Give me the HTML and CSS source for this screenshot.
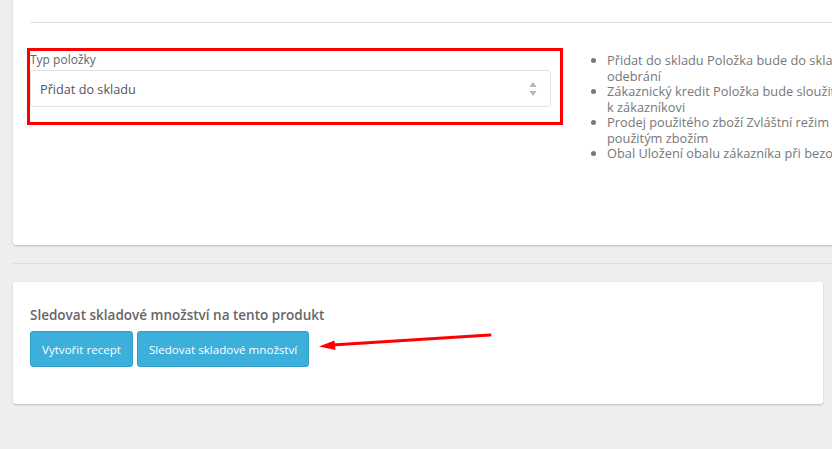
FILE: index.html
```html
<!DOCTYPE html>
<html lang="cs">
<head>
	<meta charset="UTF-8">
	<title>Skladové množství</title>
	<link rel="stylesheet" href="styles.css">
</head>
<body>
	<div class="page">
		<div class="card card-type">
			<hr class="line">
			<div class="row">
				<div class="form-group mark">
					<label class="label">Typ položky</label>
					<div class="select">
						<span>Přidat do skladu</span>
						<svg class="carets" width="8" height="16" viewBox="0 0 8 16">
							<path d="M4 1 L7.5 6 L0.5 6 Z" fill="#b5b5b5"/>
							<path d="M4 15 L7.5 10 L0.5 10 Z" fill="#b5b5b5"/>
						</svg>
					</div>
				</div>
				<ul class="help">
					<li>Přidat do skladu Položka bude do skladu přidána a při prodeji odebrání</li>
					<li>Zákaznický kredit Položka bude sloužit jako kredit přiřazený k&nbsp;zákazníkovi</li>
					<li>Prodej použitého zboží Zvláštní režim daně pro obchodníky s použitým zbožím</li>
					<li>Obal Uložení obalu zákazníka při bezobalovém prodeji</li>
				</ul>
			</div>
		</div>
		<hr class="divider">
		<div class="card card-stock">
			<h4 class="title">Sledovat skladové množství na tento produkt</h4>
			<div class="btns">
				<button class="btn">Vytvořit recept</button>
				<button class="btn">Sledovat skladové množství</button>
			</div>
			<svg class="arrow" width="180" height="24" viewBox="0 0 180 24">
				<line x1="17" y1="15" x2="175" y2="5" stroke="#f00" stroke-width="3" stroke-linecap="round"/>
				<path d="M4 16.5 L19.5 10.5 L20.5 20 Z" fill="#f00"/>
			</svg>
		</div>
	</div>
</body>
</html>
```

FILE: styles.css
```css
*{
	margin: 0;
	padding: 0;
	box-sizing: border-box;
}
body,html{
	width: 100%;
	height: 100%;
	overflow: hidden;
}
body{
	background: #eee;
	font-family: "Open Sans", "Liberation Sans", sans-serif;
	color: #666;
}
.page{
	padding: 0 0 0 13px;
	width: 1060px;
}
.card{
	background: #fff;
	border-radius: 3px;
	box-shadow: 0 1px 2px rgba(0,0,0,.2);
}
.card-type{
	border-radius: 0 0 3px 3px;
	padding: 22px 0 0 17px;
	height: 245px;
}
.line{
	border: none;
	border-top: 1px solid #ddd;
	margin-bottom: 25px;
}
.row{
	display: flex;
	align-items: flex-start;
}
.form-group{
	width: 536px;
	margin-left: -3px;
	padding-bottom: 15px;
}
.mark{
	border: 3px solid #f00;
}
.label{
	display: block;
	font-size: 12px;
	line-height: 17px;
	color: #666;
	margin-bottom: 2px;
}
.select{
	display: flex;
	align-items: center;
	justify-content: space-between;
	width: 521px;
	height: 37px;
	padding: 0 13px 0 9px;
	border: 1px solid #e2e2e2;
	border-radius: 3px;
	font-size: 12.7px;
	color: #555;
}
.carets{
	display: block;
}
.help{
	margin: 5px 0 0 32px;
	padding-left: 12px;
	width: 400px;
	font-size: 12.8px;
	line-height: 15.5px;
	color: #777;
}
.divider{
	border: none;
	border-top: 1px solid #ddd;
	margin: 18px 0;
}
.card-stock{
	position: relative;
	width: 810px;
	padding: 23px 17px 37px;
}
.title{
	font-size: 13.5px;
	font-weight: 600;
	line-height: 20px;
	color: #666;
	margin-bottom: 6px;
}
.btns{
	display: flex;
	gap: 4px;
}
.btn{
	height: 36px;
	padding: 0 11px;
	border: 1px solid #2f9fca;
	border-radius: 3px;
	background: #3cafdb;
	color: #fff;
	font-family: "Open Sans", "Liberation Sans", sans-serif;
	font-size: 11.6px;
}
.arrow{
	position: absolute;
	left: 302px;
	top: 48px;
}
```
